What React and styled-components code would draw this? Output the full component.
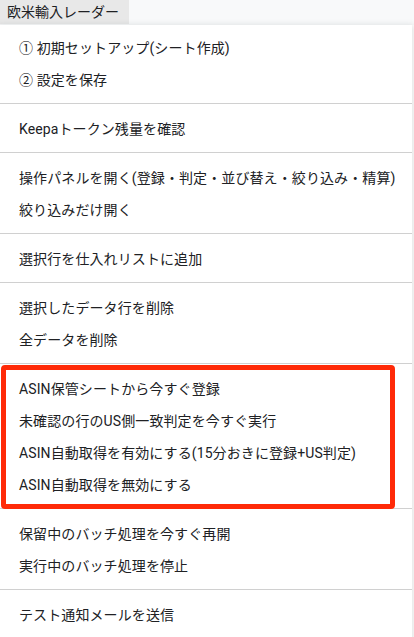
import React from "react"
import styled, { createGlobalStyle } from "styled-components"

const GlobalStyle = createGlobalStyle`
  html, body {
    margin: 0;
    padding: 0;
    background: #fff;
  }
  body {
    font-family: Roboto, "Noto Sans CJK JP", "Noto Sans", sans-serif;
    color: #202124;
  }
`

const Page = styled.div`
  width: 414px;
  height: 637px;
  overflow: hidden;
  position: relative;
`

const TopBar = styled.div`
  display: flex;
  height: 25px;
  background: #f8f9fa;
`

const Tab = styled.div`
  box-sizing: border-box;
  width: 129px;
  height: 24px;
  padding: 0 7px;
  background: #e8e8e8;
  font-size: 14px;
  line-height: 24px;
  color: #202124;
  white-space: nowrap;
`

const Menu = styled.div`
  width: 412px;
  padding: 6px 0 8px;
  background: #fff;
  box-shadow: 0 2px 6px 2px rgba(60, 64, 67, 0.15);
  position: relative;
`

const Item = styled.div`
  height: 32px;
  padding-left: 19px;
  display: flex;
  align-items: center;
  font-size: 14px;
  letter-spacing: 0.1px;
  color: #202124;
  white-space: nowrap;
`

const Divider = styled.div`
  height: 1px;
  margin: 8px 0;
  background: #d0d0d0;
`

const Highlight = styled.div`
  position: relative;
  &::after {
    content: "";
    position: absolute;
    top: -7px;
    bottom: -9px;
    left: 1px;
    width: 394px;
    box-sizing: border-box;
    border: 5px solid #ff2a08;
    border-radius: 4px;
    pointer-events: none;
  }
`

const groups = [
  { items: ["① 初期セットアップ(シート作成)", "② 設定を保存"] },
  { items: ["Keepaトークン残量を確認"] },
  { items: ["操作パネルを開く(登録・判定・並び替え・絞り込み・精算)", "絞り込みだけ開く"] },
  { items: ["選択行を仕入れリストに追加"] },
  { items: ["選択したデータ行を削除", "全データを削除"] },
  {
    highlight: true,
    items: [
      "ASIN保管シートから今すぐ登録",
      "未確認の行のUS側一致判定を今すぐ実行",
      "ASIN自動取得を有効にする(15分おきに登録+US判定)",
      "ASIN自動取得を無効にする",
    ],
  },
  { items: ["保留中のバッチ処理を今すぐ再開", "実行中のバッチ処理を停止"] },
  { items: ["テスト通知メールを送信"] },
]

const App = () => {
  return (
    <Page>
      <GlobalStyle />
      <TopBar>
        <Tab>欧米輸入レーダー</Tab>
      </TopBar>
      <Menu>
        {groups.map((group, i) => {
          const rows = group.items.map(label => <Item key={label}>{label}</Item>)
          return (
            <React.Fragment key={i}>
              {i > 0 ? <Divider /> : null}
              {group.highlight ? <Highlight>{rows}</Highlight> : rows}
            </React.Fragment>
          )
        })}
      </Menu>
    </Page>
  )
}

export default App
